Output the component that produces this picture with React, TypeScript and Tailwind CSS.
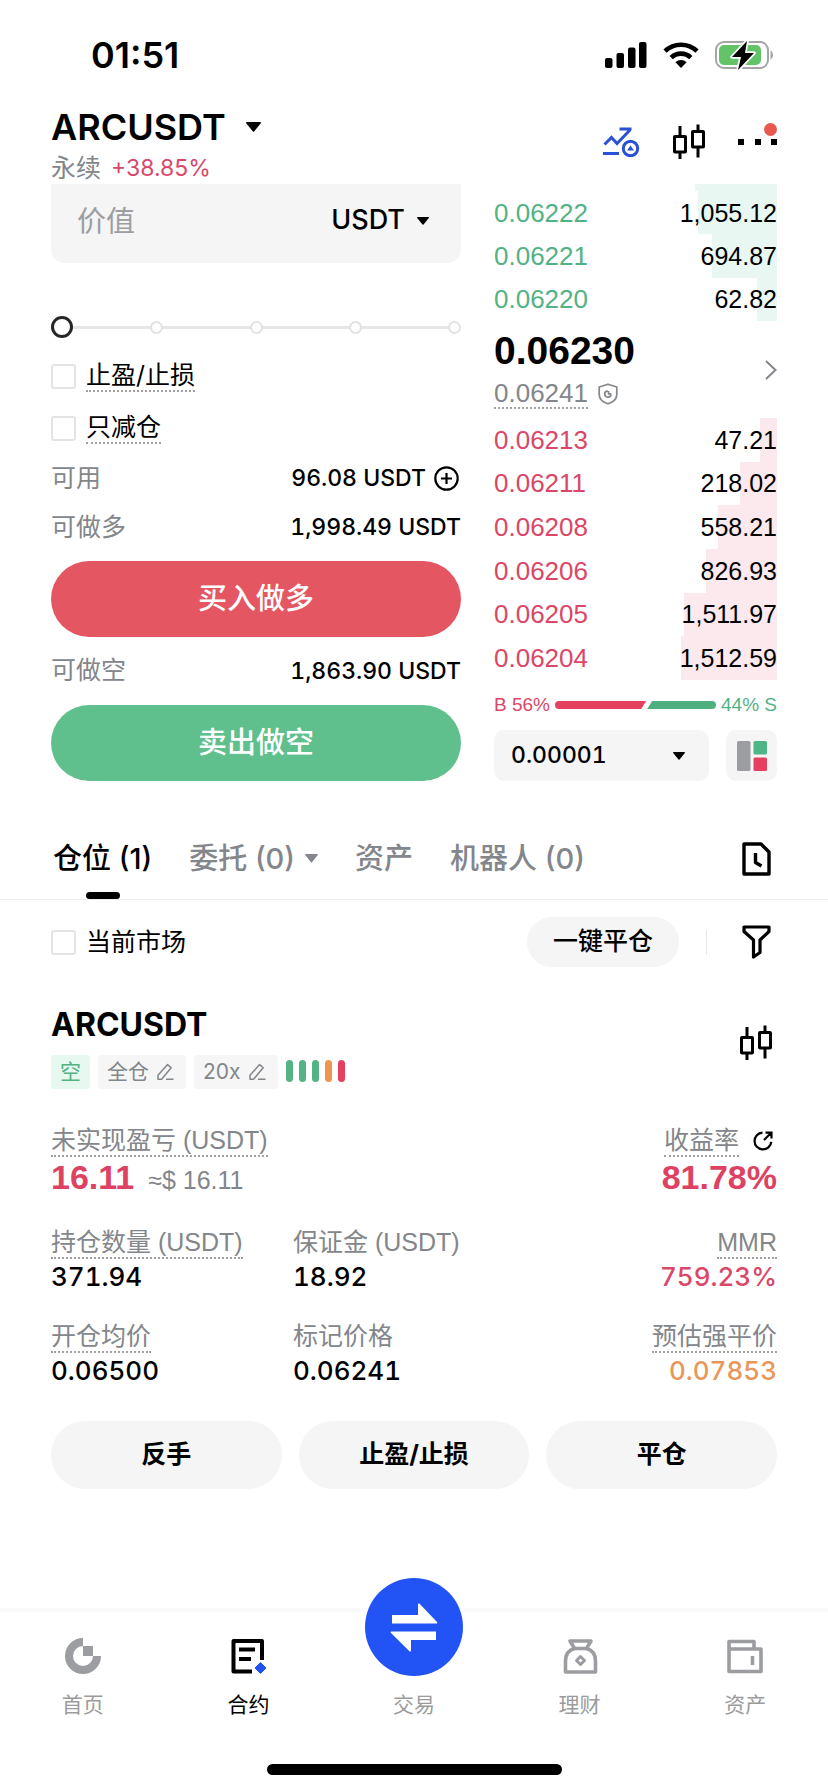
// src/pages/Futures.tsx
import React, { useState } from 'react';

type Level = { price: string; amount: string; depth: number };

const asks: Level[] = [
    { price: '0.06222', amount: '1,055.12', depth: 28 },
    { price: '0.06221', amount: '694.87', depth: 23 },
    { price: '0.06220', amount: '62.82', depth: 7 },
];

const bids: Level[] = [
    { price: '0.06213', amount: '47.21', depth: 6 },
    { price: '0.06211', amount: '218.02', depth: 13 },
    { price: '0.06208', amount: '558.21', depth: 21 },
    { price: '0.06206', amount: '826.93', depth: 25 },
    { price: '0.06205', amount: '1,511.97', depth: 33 },
    { price: '0.06204', amount: '1,512.59', depth: 34 },
];

const Caret: React.FC<{ className?: string }> = ({ className = 'w-3' }) => (
    <svg viewBox="0 0 12 8" className={`shrink-0 ${className}`} fill="currentColor" aria-hidden="true">
        <path d="M0.6 0h10.8c.5 0 .7.5.4.9L6.5 7.6c-.3.3-.7.3-1 0L.2.9C-.1.5.1 0 .6 0z" />
    </svg>
);

const CandlesIcon: React.FC = () => (
    <svg viewBox="0 0 34 36" className="w-[34px]" fill="none" stroke="currentColor" strokeWidth="3" aria-hidden="true">
        <rect x="2.5" y="12.5" width="11" height="15.5" rx="0.5" />
        <rect x="20.5" y="7.5" width="11" height="15.5" rx="0.5" />
        <path d="M8 2v10M8 28v7M26 0.5v7M26 23v10.5" />
    </svg>
);

const PencilIcon: React.FC = () => (
    <svg viewBox="0 0 18 18" className="w-[18px]" fill="none" stroke="currentColor" strokeWidth="1.5" strokeLinejoin="round" aria-hidden="true">
        <path d="M2 16.2v-4L11.6 1.6l3.6 3.2L5.6 16.2zM10 16.3h7.5" />
    </svg>
);

const DepthTable: React.FC<{ label: string; levels: Level[]; priceClass: string; fill: string; heightClass: string }> = ({
    label,
    levels,
    priceClass,
    fill,
    heightClass,
}) => (
    <table aria-label={label} className={`w-full font-['Liberation_Sans',sans-serif] text-[25px] ${heightClass}`}>
        <tbody>
            {levels.map((level) => (
                <tr
                    key={level.price}
                    style={{ backgroundImage: `linear-gradient(to left, ${fill} ${level.depth}%, transparent ${level.depth}%)` }}
                >
                    <td className={`p-0 text-[26px] leading-8 ${priceClass}`}>{level.price}</td>
                    <td className="p-0 text-right leading-8">{level.amount}</td>
                </tr>
            ))}
        </tbody>
    </table>
);

const Check: React.FC<{ label: string; dotted?: boolean }> = ({ label, dotted }) => (
    <label className="flex items-center gap-[10px] text-[25px]">
        <input type="checkbox" className="size-[25px] appearance-none rounded-[3px] border-2 border-[#e4e4e4] bg-white checked:bg-black" />
        <span className={dotted ? 'border-b-2 border-dotted border-[#a0a0a0] leading-[30px]' : 'leading-[30px]'}>{label}</span>
    </label>
);

const Available: React.FC<{ label: string; value: string; children?: React.ReactNode }> = ({ label, value, children }) => (
    <>
        <span className="text-[25px] text-[#83868a]">{label}</span>
        <span className="flex items-center gap-2 text-[23px] font-medium tabular-nums">
            {value}
            {children}
        </span>
    </>
);

const Stat: React.FC<{ label: string; value: string; dotted?: boolean; right?: boolean; valueClass?: string }> = ({
    label,
    value,
    dotted,
    right,
    valueClass = '',
}) => (
    <div className={right ? 'flex flex-col items-end' : 'flex flex-col items-start'}>
        <dt
            className={`border-b-2 border-dotted font-['Liberation_Sans','Noto_Sans_CJK_SC',sans-serif] text-[25px] leading-[30px] text-[#83868a] ${dotted ? 'border-[#a0a0a0]' : 'border-transparent'}`}
        >
            {label}
        </dt>
        <dd className={`text-[26px] font-medium leading-9 tabular-nums ${valueClass}`}>{value}</dd>
    </div>
);

const StatusBar: React.FC = () => (
    <div className="flex h-[108px] items-center justify-between pl-[91px] pr-[53px] pt-[2px]">
        <span className="text-4xl font-semibold">01:51</span>
        <div className="flex items-center gap-4">
            <svg viewBox="0 0 42 26" className="w-[42px]" aria-hidden="true">
                <rect x="0" y="16" width="7.5" height="10" rx="2" />
                <rect x="11.5" y="11" width="7.5" height="15" rx="2" />
                <rect x="23" y="5.5" width="7.5" height="20.5" rx="2" />
                <rect x="34" y="0" width="7.5" height="26" rx="2" />
            </svg>
            <svg viewBox="0 0 36 26" className="w-9" fill="none" stroke="#000" strokeWidth="4.6" aria-hidden="true">
                <path d="M2 9.2a23 23 0 0 1 32 0M8.2 15.6a14 14 0 0 1 19.6 0" />
                <path d="M12.4 20.2a8 8 0 0 1 11.2 0L18 26z" fill="#000" stroke="none" />
            </svg>
            <svg viewBox="0 0 60 30" className="w-[60px]" aria-hidden="true">
                <rect x="1" y="2" width="52" height="26" rx="8" fill="none" stroke="#a5a5a5" strokeWidth="2" />
                <path d="M55.5 10.5c3.3 1.6 3.3 7.4 0 9z" fill="#a5a5a5" />
                <rect x="4" y="5" width="42" height="20" rx="5" fill="#62c466" />
                <path d="M32 1 17 17h9l-3 13 16-17h-9z" stroke="#fff" strokeWidth="3.5" strokeLinejoin="round" />
                <path d="M32 1 17 17h9l-3 13 16-17h-9z" strokeLinejoin="round" />
            </svg>
        </div>
    </div>
);

const PairHeader: React.FC = () => (
    <header className="flex items-center justify-between px-[51px]">
        <div>
            <button className="flex items-center gap-5 text-4xl font-semibold leading-[38px]">
                ARCUSDT
                <Caret className="w-[15px]" />
            </button>
            <p className="flex gap-[10px] pt-[6px] text-[25px] leading-8 text-[#83868a]">
                永续 <span className="text-[23px] leading-8 text-[#d9476a]">+38.85%</span>
            </p>
        </div>
        <div className="flex items-center gap-8 pb-2">
            <button aria-label="指标">
                <svg viewBox="0 0 37 30" className="w-[37px]" fill="none" stroke="#2a50d8" strokeWidth="3" aria-hidden="true">
                    <path d="M1.5 17.5 8.5 10.5l5.5 6L27 3M16.5 2H28.5M0 26.5h16" />
                    <circle cx="27.5" cy="21.5" r="7.2" />
                    <path d="M27.5 18.5 31 23.5h-7z" fill="#2a50d8" stroke="none" />
                </svg>
            </button>
            <button aria-label="K线">
                <CandlesIcon />
            </button>
            <button aria-label="更多" className="relative flex w-[39px] justify-between">
                <i className="size-[6px] bg-black" />
                <i className="size-[6px] bg-black" />
                <i className="size-[6px] bg-black" />
                <i className="absolute -top-4 right-0 size-[13px] rounded-full bg-[#e85a4f]" />
            </button>
        </div>
    </header>
);

const OrderForm: React.FC = () => {
    const [percent, setPercent] = useState(0);

    return (
        <form className="min-w-0 flex-[410]" onSubmit={(e) => e.preventDefault()}>
            <div className="flex h-[79px] items-center rounded-b-[14px] bg-[#f5f5f5] pb-1 pl-[26px] pr-8">
                <input aria-label="价值" placeholder="价值" className="w-0 min-w-0 flex-1 bg-transparent text-[29px] placeholder:text-[#9c9ea1] focus:outline-none" />
                <label className="flex items-center gap-3 pb-[2px]">
                    <select aria-label="单位" className="field-sizing-content appearance-none text-[27px] font-medium focus:outline-none">
                        <option>USDT</option>
                    </select>
                    <Caret />
                </label>
            </div>

            {/* 仓位比例 */}
            <div className="relative mt-[53px] flex h-[22px] items-center justify-between">
                <div className="absolute inset-x-2 top-[10px] h-[3px] bg-[#e6e6e6]" />
                {[0, 25, 50, 75, 100].map((step) => (
                    <i key={step} className="relative size-[13px] rounded-full border-2 border-[#e2e2e2] bg-white" />
                ))}
                <input
                    type="range"
                    aria-label="仓位比例"
                    value={percent}
                    onChange={(e) => setPercent(Number(e.target.value))}
                    className="absolute inset-0 w-full appearance-none bg-transparent [&::-webkit-slider-thumb]:size-[22px] [&::-webkit-slider-thumb]:appearance-none [&::-webkit-slider-thumb]:rounded-full [&::-webkit-slider-thumb]:border-3 [&::-webkit-slider-thumb]:border-[#262626] [&::-webkit-slider-thumb]:bg-white"
                />
            </div>

            <div className="mt-3 flex h-[52px] items-center">
                <Check label="止盈/止损" dotted />
            </div>
            <div className="flex h-[52px] items-center">
                <Check label="只减仓" dotted />
            </div>

            <div className="flex h-[49px] items-center justify-between">
                <Available label="可用" value="96.08 USDT">
                    <button type="button" aria-label="划转" className="mr-[2px]">
                        <svg viewBox="0 0 25 25" className="w-[25px]" fill="none" stroke="#000" strokeWidth="2.2" aria-hidden="true">
                            <circle cx="12.5" cy="12.5" r="11.2" />
                            <path d="M12.5 7v11M7 12.5h11" />
                        </svg>
                    </button>
                </Available>
            </div>
            <div className="flex h-[49px] items-center justify-between">
                <Available label="可做多" value="1,998.49 USDT" />
            </div>
            <button className="mt-[9px] h-[76px] w-full rounded-full bg-[#e35662] text-[29px] font-medium text-white">买入做多</button>
            <div className="flex h-[68px] items-center justify-between">
                <Available label="可做空" value="1,863.90 USDT" />
            </div>
            <button className="h-[76px] w-full rounded-full bg-[#60c08d] text-[29px] font-medium text-white">卖出做空</button>
        </form>
    );
};

const OrderBook: React.FC = () => (
    <section className="min-w-0 flex-[283]">
        {/* 滚动到顶部栏下方的一档 */}
        <div className="ml-auto h-[7px] w-[29%] bg-[#e8f7f1]" />
        <DepthTable label="卖盘" levels={asks} priceClass="text-[#53b285]" fill="#e8f7f1" heightClass="h-[130px]" />

        <div className="flex h-[97px] items-center justify-between font-['Liberation_Sans',sans-serif]">
            <div>
                <p className="text-[39px] font-bold leading-[42px]">0.06230</p>
                <p className="mt-[7px] flex items-center gap-[10px] text-[26px] text-[#83868a]">
                    <span className="border-b-2 border-dotted border-[#a0a0a0] leading-7">0.06241</span>
                    <svg viewBox="0 0 20 22" className="w-5" fill="none" stroke="#83868a" strokeWidth="1.7" strokeLinejoin="round" aria-hidden="true">
                        <path d="M10 1.2 18.8 4v7.5c0 4.5-3.7 7.6-8.8 9.3-5.1-1.7-8.8-4.8-8.8-9.3V4z" />
                        <path d="M9.6 7.8a3.2 3.2 0 1 0 3.5 3.6M10.5 8v2.8h2.8" />
                    </svg>
                </p>
            </div>
            <button aria-label="深度">
                <svg viewBox="0 0 12 20" className="w-3" fill="none" stroke="#83868a" strokeWidth="2" aria-hidden="true">
                    <path d="M1 1l9.5 9L1 19" />
                </svg>
            </button>
        </div>

        <DepthTable label="买盘" levels={bids} priceClass="text-[#da4767]" fill="#fbe9ed" heightClass="h-[262px]" />

        <div className="flex h-[50px] items-center gap-[5px] font-['Liberation_Sans',sans-serif] text-[19px]">
            <span className="text-[#da4767]">B 56%</span>
            <div className="flex h-2 flex-1 gap-px">
                <div className="flex-[57] rounded-l-full bg-[#e5405f] [clip-path:polygon(0_0,100%_0,calc(100%-5px)_100%,0_100%)]" />
                <div className="flex-[43] rounded-r-full bg-[#4fb07f] [clip-path:polygon(5px_0,100%_0,100%_100%,0_100%)]" />
            </div>
            <span className="text-[#53b285]">44% S</span>
        </div>

        <div className="flex h-[51px] gap-[17px]">
            <label className="flex min-w-0 flex-1 items-center rounded-[10px] bg-[#f5f5f5] pl-[17px] pr-6">
                <select aria-label="精度" className="min-w-0 flex-1 appearance-none text-[23px] font-medium tabular-nums focus:outline-none">
                    <option>0.00001</option>
                </select>
                <Caret />
            </label>
            <button aria-label="盘口布局" className="flex w-[51px] items-center justify-center rounded-[10px] bg-[#f5f5f5]">
                <svg viewBox="0 0 30 30" className="w-[30px]" aria-hidden="true">
                    <rect width="13.5" height="30" rx="1.5" fill="#9b9da1" />
                    <rect x="16.5" width="13.5" height="13.5" rx="1.5" fill="#4fb586" />
                    <rect x="16.5" y="16.5" width="13.5" height="13.5" rx="1.5" fill="#e5405f" />
                </svg>
            </button>
        </div>
    </section>
);

const PositionTabs: React.FC = () => (
    <nav className="mt-[37px] flex h-[82px] items-center justify-between border-b border-[#ededed] pl-[53px] pr-[57px] text-[29px] font-medium text-[#83868a]">
        <div className="flex h-full items-center gap-[37px]">
            <button className="relative h-full text-black">
                仓位 (1)
                <i className="absolute bottom-0 left-1/2 h-[7px] w-[34px] -translate-x-1/2 rounded-full bg-black" />
            </button>
            <button className="flex items-center gap-[10px]">
                委托 (0)
                <Caret className="w-[13px]" />
            </button>
            <button>资产</button>
            <button>机器人 (0)</button>
        </div>
        <button aria-label="历史记录">
            <svg viewBox="0 0 29 34" className="w-[29px]" fill="none" stroke="#000" strokeWidth="3.4" strokeLinejoin="round" aria-hidden="true">
                <path d="M2 2h17l8 8v22H2zM13.5 11v9.5l6 3.5" />
            </svg>
        </button>
    </nav>
);

const PositionCard: React.FC = () => (
    <section className="px-[51px]">
        <div className="flex h-[84px] items-center justify-between">
            <Check label="当前市场" />
            <div className="flex items-center">
                <button className="h-[50px] rounded-full bg-[#f5f5f5] px-[26px] text-[25px] font-medium">一键平仓</button>
                <i className="ml-[27px] mr-[35px] h-[25px] w-px bg-[#e6e6e6]" />
                <button aria-label="筛选" className="mr-[6px]">
                    <svg viewBox="0 0 29 34" className="w-[29px]" fill="none" stroke="#000" strokeWidth="3.2" strokeLinejoin="round" aria-hidden="true">
                        <path d="M2 2h25v4.5l-9 8.5v12.5L11.5 32V15L2 6.5z" />
                    </svg>
                </button>
            </div>
        </div>

        <div className="mt-[21px] flex items-center justify-between">
            <div>
                <h2 className="text-[32px] font-bold leading-10">ARCUSDT</h2>
                <div className="mt-[10px] flex h-[34px] items-stretch gap-2 text-[21px] text-[#83868a]">
                    <span className="flex items-center rounded bg-[#e6f8f0] px-[9px] text-[#53b285]">空</span>
                    <button className="flex items-center gap-[7px] rounded bg-[#f6f6f7] pl-[9px] pr-3">
                        全仓 <PencilIcon />
                    </button>
                    <button className="flex items-center gap-[7px] rounded bg-[#f6f6f7] pl-[9px] pr-3">
                        20x <PencilIcon />
                    </button>
                    <div className="flex items-start gap-[6px] pt-[5px]">
                        <i className="h-[22px] w-[7px] rounded-full bg-[#54b384]" />
                        <i className="h-[22px] w-[7px] rounded-full bg-[#54b384]" />
                        <i className="h-[22px] w-[7px] rounded-full bg-[#54b384]" />
                        <i className="h-[22px] w-[7px] rounded-full bg-[#ee9650]" />
                        <i className="h-[22px] w-[7px] rounded-full bg-[#e5405f]" />
                    </div>
                </div>
            </div>
            <button aria-label="K线" className="mb-2 mr-1">
                <CandlesIcon />
            </button>
        </div>

        <dl className="mt-9 flex justify-between font-['Liberation_Sans','Noto_Sans_CJK_SC',sans-serif]">
            <div>
                <dt className="border-b-2 border-dotted border-[#a0a0a0] text-[25px] leading-[30px] text-[#83868a]">未实现盈亏 (USDT)</dt>
                <dd className="flex items-baseline gap-[14px] text-[34px] font-bold leading-10 text-[#dd4263]">
                    16.11 <small className="text-[25px] font-normal text-[#83868a]">≈$ 16.11</small>
                </dd>
            </div>
            <div className="flex flex-col items-end">
                <dt className="flex items-center gap-[14px] pr-1 text-[25px] text-[#83868a]">
                    <span className="border-b-2 border-dotted border-[#a0a0a0] leading-[30px]">收益率</span>
                    <button aria-label="分享">
                        <svg viewBox="0 0 20 20" className="w-5" fill="none" stroke="#000" strokeWidth="2.2" aria-hidden="true">
                            <path d="M9.5 1.6a8.4 8.4 0 1 0 8.8 9.2M11 9 18 2M12.5 1.6h6v6" />
                        </svg>
                    </button>
                </dt>
                <dd className="text-[34px] font-bold leading-10 text-[#dd4263]">81.78%</dd>
            </div>
        </dl>

        <dl className="mt-[27px] grid grid-cols-3 gap-y-[26px]">
            <Stat label="持仓数量 (USDT)" value="371.94" dotted />
            <Stat label="保证金 (USDT)" value="18.92" />
            <Stat label="MMR" value="759.23%" dotted right valueClass="text-[#da4767]" />
            <Stat label="开仓均价" value="0.06500" dotted />
            <Stat label="标记价格" value="0.06241" />
            <Stat label="预估强平价" value="0.07853" dotted right valueClass="text-[#e8975a]" />
        </dl>

        <div className="mt-8 grid grid-cols-3 gap-[17px] text-[25px] font-bold">
            <button className="h-[68px] rounded-full bg-[#f5f5f5]">反手</button>
            <button className="h-[68px] rounded-full bg-[#f5f5f5]">止盈/止损</button>
            <button className="h-[68px] rounded-full bg-[#f5f5f5]">平仓</button>
        </div>
    </section>
);

const BottomNav: React.FC = () => (
    <footer className="mt-auto border-t-4 border-[#fafafa]">
        <nav className="grid h-[108px] grid-cols-5 items-end text-[21px] leading-[30px] text-[#9b9b9b]">
            <a href="#home" className="flex flex-col items-center gap-4">
                <svg viewBox="0 0 36 36" className="w-9" aria-hidden="true">
                    <path d="M18 4A14 14 0 1 0 32 18" fill="none" stroke="#9b9da1" strokeWidth="8" />
                    <rect x="18" y="8" width="10" height="10" fill="#9b9da1" />
                </svg>
                首页
            </a>
            <a href="#futures" className="flex flex-col items-center gap-4 text-black">
                <svg viewBox="0 0 36 36" className="w-9" fill="none" stroke="#000" strokeWidth="4" strokeLinejoin="round" aria-hidden="true">
                    <path d="M32 22V3H3.5v30.5H22M9 11.5h16M9 21h12" />
                    <path d="M30.5 24.5 36 30l-5.5 5.5L25 30z" fill="#1f52f0" stroke="#1f52f0" strokeWidth="1" />
                </svg>
                合约
            </a>
            <a href="#trade" className="flex flex-col items-center gap-[14px]">
                <svg viewBox="0 0 98 98" className="-mt-16 w-[98px]" aria-hidden="true">
                    <circle cx="49" cy="49" r="49" fill="#2153f5" />
                    <path d="M27 37h26V26.5c0-1 1-1.3 1.6-.7L72 44c.7.7.3 1.6-.6 1.6H27zM71 62H46v10.5c0 1-1 1.3-1.6.7L26 55c-.7-.7-.3-1.600.6-1.600H71z" fill="#fff" />
                </svg>
                交易
            </a>
            <a href="#earn" className="flex flex-col items-center gap-4">
                <svg viewBox="0 0 36 36" className="w-9" fill="none" stroke="#9b9da1" strokeWidth="3.6" strokeLinejoin="round" aria-hidden="true">
                    <path d="M8 3h21l-4.5 7.5h-12zM13 10.5C6.5 12 3.5 17 3.5 23v11h30V23c0-6-3-11-9.5-12.5z" />
                    <path d="M18.5 18.5l4 4-4 4-4-4z" strokeWidth="3" />
                </svg>
                理财
            </a>
            <a href="#assets" className="flex flex-col items-center gap-4">
                <svg viewBox="0 0 36 36" className="w-9" fill="none" stroke="#9b9da1" strokeWidth="3.6" strokeLinejoin="round" aria-hidden="true">
                    <path d="M2 11V3.5h25V11M2 11h32v22.5H2zM25.5 18v9" />
                </svg>
                资产
            </a>
        </nav>
        <div className="mx-auto mb-[17px] mt-[44px] h-[11px] w-[295px] rounded-full bg-black" />
    </footer>
);

const App: React.FC = () => {
    return (
        <div className="flex min-h-screen flex-col bg-white font-['Inter','Noto_Sans_CJK_SC',sans-serif] text-black">
            <StatusBar />
            <PairHeader />
            <main>
                <div className="flex gap-[33px] px-[51px]">
                    <OrderForm />
                    <OrderBook />
                </div>
                <PositionTabs />
                <PositionCard />
            </main>
            <BottomNav />
        </div>
    );
};

export default App;
